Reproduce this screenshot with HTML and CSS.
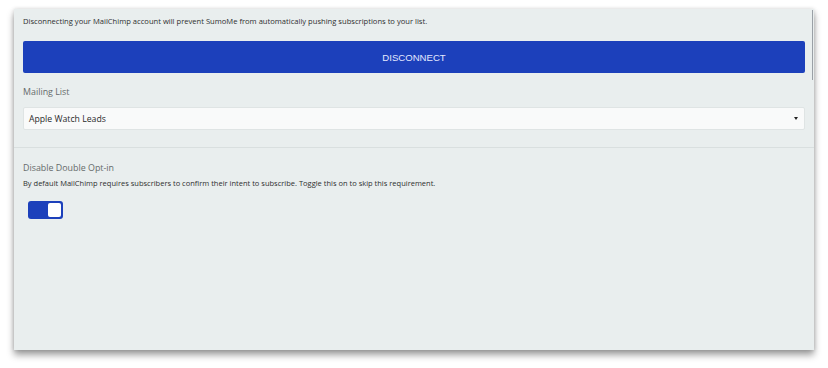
FILE: index.html
```html
<!DOCTYPE html>

<html>
  <head>
    <title>MailChimp Settings</title>

    <link rel="stylesheet" href="styles.css">
  </head>
  <body>
    <main class="panel">
      <section class="account">
        <p class="note">
          Disconnecting your MailChimp account will prevent SumoMe from automatically pushing subscriptions to your list.
        </p>

        <button type="button" class="disconnect">DISCONNECT</button>

        <label class="field-label" for="mailing-list">Mailing List</label>
        <div class="select">
          <span class="select-value">Apple Watch Leads</span>
          <span class="caret"></span>
        </div>
      </section>

      <section class="opt-in">
        <div class="field-label">Disable Double Opt-in</div>
        <p class="help">
          By default MailChimp requires subscribers to confirm their intent to subscribe. Toggle this on to skip this requirement.
        </p>

        <div class="toggle is-on">
          <span class="knob"></span>
        </div>
      </section>

      <div class="scrollbar"></div>
    </main>
  </body>
</html>
```

FILE: styles.css
```css
* { box-sizing: border-box; }
body {
  margin: 0;
  height: 368px;
  background: white;
  font-family: "Open Sans", sans-serif;
  color: #444;
}
.panel {
  position: relative;
  margin: 9px 14px 0;
  width: 800px;
  height: 341px;
  background: #e9eeee;
  box-shadow: 0 5px 7px rgba(0, 0, 0, 0.38), 0 0 4px rgba(0, 0, 0, 0.15);
}
.account {
  padding: 5px 9px 17px;
  border-bottom: 1px solid #d9dfdf;
}
.note {
  margin: 0;
  font-size: 7.6px;
  line-height: 14px;
  color: #2e2e2e;
}
.disconnect {
  display: block;
  width: 100%;
  height: 32px;
  margin-top: 13px;
  border: 0;
  border-radius: 2px;
  background: #1c40bb;
  color: #e4e9ff;
  font-family: "Liberation Sans", Arial, sans-serif;
  font-size: 9.6px;
  cursor: pointer;
}
.field-label {
  display: block;
  margin-top: 11px;
  font-size: 8.9px;
  line-height: 15px;
  color: #666b6b;
}
.select {
  display: flex;
  align-items: center;
  justify-content: space-between;
  height: 23px;
  margin-top: 8px;
  padding: 0 6px 0 5px;
  background: #f9fafa;
  border: 1px solid #dfe4e4;
  border-radius: 2px;
  font-size: 8.7px;
  color: #2a2a2a;
}
.caret {
  width: 0;
  height: 0;
  border-left: 2.5px solid transparent;
  border-right: 2.5px solid transparent;
  border-top: 3px solid #222;
}
.opt-in {
  padding: 3px 9px 0;
}
.opt-in .field-label {
  margin-top: 9px;
}
.help {
  margin: 2px 0 0;
  font-size: 7.5px;
  line-height: 13px;
  color: #2e2e2e;
}
.toggle {
  display: flex;
  align-items: center;
  width: 35px;
  height: 18px;
  margin: 11px 0 0 5px;
  padding: 2px;
  border-radius: 3px;
  background: #1c40bb;
}
.toggle.is-on {
  justify-content: flex-end;
}
.knob {
  width: 13px;
  height: 14px;
  border-radius: 2px;
  background: white;
}
.scrollbar {
  position: absolute;
  top: 1px;
  right: 1px;
  width: 1px;
  height: 70px;
  background: #9aa0a6;
}
```
